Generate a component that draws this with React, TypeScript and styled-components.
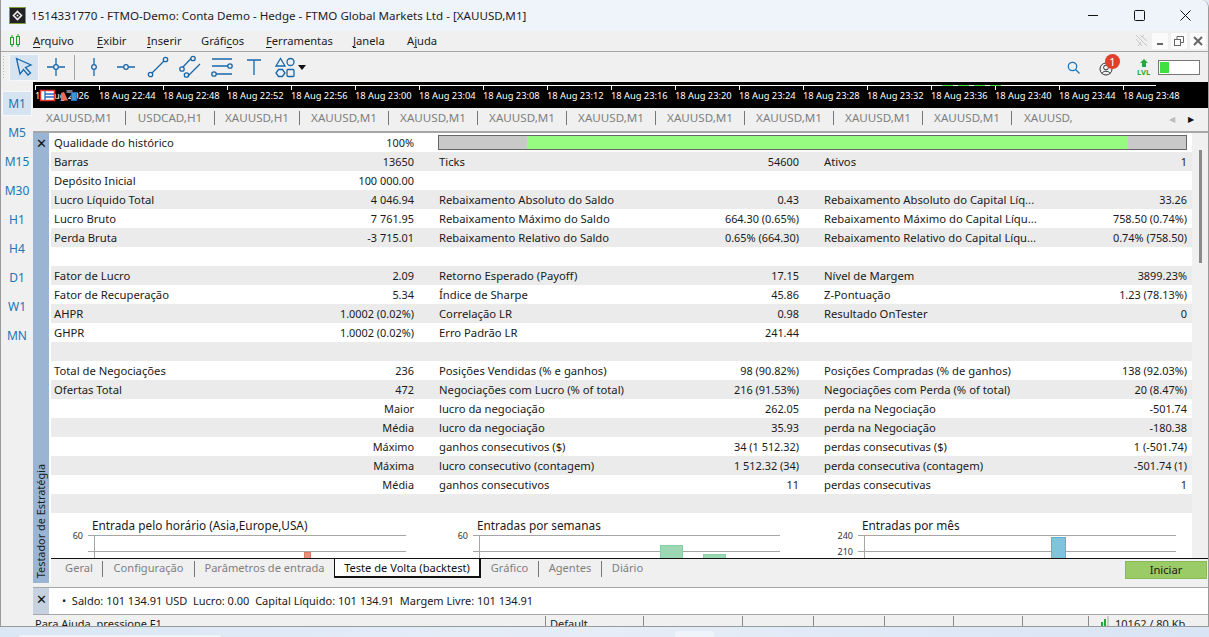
import styled, { createGlobalStyle } from "styled-components"

const Global = createGlobalStyle`
    html, body {
        margin: 0;
        padding: 0;
        height: 100%;
        overflow: hidden;
        background: #dfe8f4;
    }
    * { box-sizing: border-box; }
`

const Page = styled.div`
    width: 1209px;
    height: 637px;
    display: flex;
    flex-direction: column;
    font-family: "Noto Sans", "Open Sans", sans-serif;
    font-size: 12px;
    color: #1a1a1a;
    overflow: hidden;
`

const Win = styled.div`
    height: 627px;
    flex: none;
    display: flex;
    flex-direction: column;
    overflow: hidden;
    background: #f0f0f0;
    border-left: 1px solid #9a9a9a;
    border-right: 1px solid #9a9a9a;
    border-bottom: 1px solid #9a9a9a;
    border-top-right-radius: 8px;
`

const Desktop = styled.div`
    height: 10px;
    flex: none;
    background: linear-gradient(90deg, #dbe7f5, #e6edf8 50%, #d9e4f4);
    display: flex;
    padding-left: 18px;
`

const TaskTab = styled.div<{ $w: number; $top: number; $left: number }>`
    width: ${(p) => p.$w}px;
    height: 10px;
    margin-top: ${(p) => p.$top}px;
    margin-left: ${(p) => p.$left}px;
    background: #eff3fa;
    border-radius: 4px 4px 0 0;
`

const TitleBar = styled.div`
    height: 31px;
    flex: none;
    display: flex;
    align-items: center;
    background: #eff4fa;
    padding-left: 8px;
`

const TitleText = styled.div`
    margin-left: 5px;
    flex: 1;
    font-size: 11.6px;
    white-space: nowrap;
    color: #1c1c1c;
`

const WinButton = styled.div`
    width: 46px;
    height: 31px;
    display: flex;
    align-items: center;
    justify-content: center;
`

const MenuBar = styled.div`
    height: 21px;
    flex: none;
    display: flex;
    align-items: center;
    background: #f0f0f0;
    border-bottom: 1px solid #a6a6a6;
    padding: 0 0 1px 8px;
`

const MenuItems = styled.div`
    display: flex;
    margin-left: 12px;
    flex: 1;
`

const MenuItem = styled.span<{ $w: number }>`
    width: ${(p) => p.$w}px;
    color: #1c1c1c;
    font-size: 11.2px;
    white-space: nowrap;
    u { text-underline-offset: 2px; }
`

const PinIcon = styled.svg`
    margin-right: 4px;
`

const MdiButtons = styled.div`
    display: flex;
    align-items: center;
    gap: 3px;
    padding-right: 2px;
`

const MdiButton = styled.div`
    width: 16px;
    height: 16px;
    background: #fbfbfb;
    display: flex;
    align-items: center;
    justify-content: center;
`

const Toolbar = styled.div`
    height: 30px;
    flex: none;
    display: flex;
    align-items: center;
    background: #f0f0f0;
    padding-left: 1px;
`

const Grip = styled.div`
    width: 4px;
    height: 24px;
    margin-right: 3px;
    background-image: radial-gradient(#b5b5b5 1px, transparent 1px);
    background-size: 3px 3px;
`

const ToolButton = styled.div<{ $active?: boolean; $w?: number }>`
    width: ${(p) => p.$w || 30}px;
    height: 27px;
    display: flex;
    align-items: center;
    justify-content: center;
    background: ${(p) => (p.$active ? "#d6e4f2" : "transparent")};
    border: 1px solid ${(p) => (p.$active ? "#f4f8fc" : "transparent")};
`

const ToolSep = styled.div`
    width: 1px;
    height: 25px;
    background: #a8a8a8;
    margin: 0 3px 0 1px;
`

const Caret = styled.svg`
    margin-left: -2px;
`

const ToolSpacer = styled.div`
    flex: 1;
`

const Battery = styled.div`
    width: 42px;
    height: 15px;
    margin: 0 8px 0 7px;
    border: 1px solid #777;
    background: #fff;
    padding: 1px;
    display: flex;
`

const BatteryFill = styled.div`
    width: 9px;
    background: #3fe03f;
`

const Badge = styled.span`
    position: absolute;
    top: -5px;
    left: 6px;
    width: 15px;
    height: 15px;
    border-radius: 50%;
    background: #e0402a;
    color: #fff;
    font-size: 11px;
    line-height: 15px;
    text-align: center;
`

const UserIcon = styled.div`
    position: relative;
    width: 16px;
    height: 16px;
    margin: 0 22px 0 19px;
`

const UserGlyph = styled.svg`
    margin-top: 3px;
`

const Main = styled.div`
    flex: 1;
    min-height: 0;
    display: flex;
`

const Periods = styled.div`
    width: 32px;
    flex: none;
    display: flex;
    flex-direction: column;
    align-items: center;
    padding-top: 9px;
    background: #f0f0f0;
`

const Period = styled.div<{ $active?: boolean }>`
    width: 30px;
    height: ${(p) => (p.$active ? 25 : 29)}px;
    margin-bottom: ${(p) => (p.$active ? 2 : 0)}px;
    display: flex;
    align-items: center;
    justify-content: center;
    font-size: 12px;
    color: #2274b4;
    background: ${(p) => (p.$active ? "#d6e4f2" : "transparent")};
    border: ${(p) => (p.$active ? "1px solid #f6f9fc" : "none")};
`

const Content = styled.div`
    flex: 1;
    min-width: 0;
    display: flex;
    flex-direction: column;
`

const Ruler = styled.div`
    height: 26px;
    flex: none;
    background: #000;
    position: relative;
    overflow: hidden;
`

const RulerLabels = styled.div`
    display: flex;
    padding: 7px 0 0 2px;
`

const RulerLabel = styled.div`
    width: 64px;
    flex: none;
    color: #fff;
    font-size: 9.3px;
    line-height: 14px;
    white-space: nowrap;
`

const RulerMarks = styled.svg`
    position: absolute;
    left: 0;
    top: 0;
`

const ChartTabs = styled.div`
    height: 25px;
    flex: none;
    display: flex;
    align-items: center;
    background: #f0f0f0;
    border-bottom: 2px solid #a6a6a6;
    padding-bottom: 3px;
    position: relative;
    overflow: hidden;
`

const ChartTab = styled.div<{ $w: number; $last?: boolean }>`
    width: ${(p) => p.$w}px;
    flex: none;
    height: 14px;
    line-height: 14px;
    padding-left: ${(p) => (p.$last ? 12 : 0)}px;
    text-align: ${(p) => (p.$last ? "left" : "center")};
    color: #7f7f7f;
    font-size: 11.6px;
    white-space: nowrap;
    border-right: ${(p) => (p.$last ? "none" : "1px solid #777")};
`

const TabArrows = styled.div`
    position: absolute;
    right: 0;
    top: 0;
    height: 20px;
    width: 50px;
    background: #f0f0f0;
    display: flex;
    align-items: center;
    justify-content: flex-end;
    gap: 13px;
    padding-right: 14px;
    font-size: 8px;
`

const TabArrow = styled.span<{ $off?: boolean }>`
    color: ${(p) => (p.$off ? "#bdbdbd" : "#111")};
`

const Tester = styled.div`
    height: 450px;
    flex: none;
    display: flex;
    background: #fff;
`

const BlueStrip = styled.div<{ $light?: boolean }>`
    width: 16px;
    flex: none;
    background: ${(p) => (p.$light ? "#c6d2e0" : "#9ab5d3")};
    position: relative;
    display: flex;
    justify-content: center;
    padding-top: ${(p) => (p.$light ? 4 : 3)}px;
    font-size: 13px;
    line-height: 14px;
    color: #111;
`

const StripLabel = styled.div`
    position: absolute;
    bottom: 5px;
    left: 0;
    width: 16px;
    writing-mode: vertical-rl;
    transform: rotate(180deg);
    font-size: 10.9px;
    line-height: 16px;
    white-space: nowrap;
    color: #1a1a1a;
`

const TesterBody = styled.div`
    flex: 1;
    min-width: 0;
    display: flex;
    flex-direction: column;
`

const ReportArea = styled.div`
    height: 425px;
    flex: none;
    display: flex;
    overflow: hidden;
`

const Report = styled.div`
    width: 1141px;
    flex: none;
    margin-left: 2px;
`

const Row = styled.div`
    height: 19px;
    display: grid;
    grid-template-columns: 360px 360px 363px;
    column-gap: 25px;
    padding-left: 3px;
    line-height: 19px;
    font-size: 11.25px;
    white-space: nowrap;
    &:nth-child(even) {
        background: #ebebeb;
    }
`

const Cell = styled.div`
    display: flex;
    justify-content: space-between;
    min-width: 0;
`

const Value = styled.span`
    font-size: 10.9px;
`

const Progress = styled.div`
    height: 15px;
    margin: 2px 0 0 -1px;
    display: flex;
    border: 1px solid #666;
    background: #c9c9c9;
    grid-column: 2 / 4;
    padding-left: 88px;
`

const ProgressFill = styled.div`
    width: 601px;
    background: #97fb82;
`

const Gutter = styled.div`
    flex: 1;
    background: #f0f0f0;
    position: relative;
`

const Thumb = styled.div`
    position: absolute;
    left: 7px;
    top: 17px;
    width: 3px;
    height: 113px;
    background: #8a8a8a;
`

const Charts = styled.div`
    height: 45px;
    display: grid;
    grid-template-columns: 385px 385px 371px;
`

const ChartTitle = styled.div`
    margin-left: 41px;
    height: 21px;
    padding-top: 4px;
    line-height: 17px;
    font-size: 11.8px;
    white-space: nowrap;
`

const ChartPlot = styled.svg`
    display: block;
    overflow: visible;
`

const Bottom = styled.div`
    height: 25px;
    flex: none;
    display: flex;
    background: #f0f0f0;
    border-top: 1px solid #111;
    margin-left: 2px;
`

const BottomTab = styled.div<{ $w: number; $last?: boolean; $pad?: number }>`
    width: ${(p) => p.$w}px;
    flex: none;
    height: 16px;
    margin-top: 2px;
    padding-left: ${(p) => p.$pad || 0}px;
    line-height: 13px;
    text-align: center;
    color: #7f7f7f;
    font-size: 11.1px;
    white-space: nowrap;
    border-right: ${(p) => (p.$last ? "none" : "1px solid #777")};
`

const ActiveTab = styled.div`
    width: 147px;
    flex: none;
    height: 19px;
    background: #fff;
    text-align: center;
    font-size: 11.1px;
    line-height: 17px;
    color: #111;
    white-space: nowrap;
    border-left: 1px solid #111;
    border-right: 2px solid #111;
    border-bottom: 2px solid #111;
`

const BottomSpace = styled.div`
    flex: 1;
`

const StartButton = styled.div`
    width: 82px;
    height: 18px;
    margin: 2px 1px 0 0;
    background: #9bcb66;
    border: 1px solid #84bd58;
    text-align: center;
    line-height: 16px;
    font-size: 11.2px;
    color: #1a1a1a;
`

const Gap = styled.div`
    height: 5px;
    flex: none;
    background: #f0f0f0;
    border-bottom: 1px solid #a6a6a6;
`

const Toolbox = styled.div`
    height: 27px;
    flex: none;
    display: flex;
    background: #fff;
    border-bottom: 1px solid #a6a6a6;
`

const ToolboxText = styled.div`
    margin-left: 13px;
    line-height: 25px;
    font-size: 11px;
    white-space: nowrap;
`

const StatusBar = styled.div`
    flex: 1;
    min-height: 0;
    display: flex;
    overflow: hidden;
    background: #f0f0f0;
    font-size: 11px;
    line-height: 15px;
    padding-top: 1px;
`

const StatusCell = styled.div<{ $w: number; $pad?: number }>`
    width: ${(p) => p.$w}px;
    flex: none;
    padding-left: ${(p) => p.$pad || 4}px;
    border-left: 1px solid #8a8a8a;
    height: 16px;
    white-space: nowrap;
    display: flex;
    gap: 6px;
    &:first-child {
        border-left: none;
        padding-left: 2px;
    }
`

const blue = "#1767ab"

type RowData = [string?, string?, string?, string?, string?, string?]

const rows: RowData[] = [
    ["Qualidade do histórico", "100%"],
    ["Barras", "13650", "Ticks", "54600", "Ativos", "1"],
    ["Depósito Inicial", "100 000.00"],
    ["Lucro Líquido Total", "4 046.94", "Rebaixamento Absoluto do Saldo", "0.43", "Rebaixamento Absoluto do Capital Líq...", "33.26"],
    ["Lucro Bruto", "7 761.95", "Rebaixamento Máximo do Saldo", "664.30 (0.65%)", "Rebaixamento Máximo do Capital Líqu...", "758.50 (0.74%)"],
    ["Perda Bruta", "-3 715.01", "Rebaixamento Relativo do Saldo", "0.65% (664.30)", "Rebaixamento Relativo do Capital Líqu...", "0.74% (758.50)"],
    [],
    ["Fator de Lucro", "2.09", "Retorno Esperado (Payoff)", "17.15", "Nível de Margem", "3899.23%"],
    ["Fator de Recuperação", "5.34", "Índice de Sharpe", "45.86", "Z-Pontuação", "1.23 (78.13%)"],
    ["AHPR", "1.0002 (0.02%)", "Correlação LR", "0.98", "Resultado OnTester", "0"],
    ["GHPR", "1.0002 (0.02%)", "Erro Padrão LR", "241.44"],
    [],
    ["Total de Negociações", "236", "Posições Vendidas (% e ganhos)", "98 (90.82%)", "Posições Compradas (% de ganhos)", "138 (92.03%)"],
    ["Ofertas Total", "472", "Negociações com Lucro (% of total)", "216 (91.53%)", "Negociações com Perda (% of total)", "20 (8.47%)"],
    ["", "Maior", "lucro da negociação", "262.05", "perda na Negociação", "-501.74"],
    ["", "Média", "lucro da negociação", "35.93", "perda na Negociação", "-180.38"],
    ["", "Máximo", "ganhos consecutivos ($)", "34 (1 512.32)", "perdas consecutivas ($)", "1 (-501.74)"],
    ["", "Máxima", "lucro consecutivo (contagem)", "1 512.32 (34)", "perda consecutiva (contagem)", "-501.74 (1)"],
    ["", "Média", "ganhos consecutivos", "11", "perdas consecutivas", "1"],
    [],
]

const rulerTimes = [
    "18 Aug 2026", "18 Aug 22:44", "18 Aug 22:48", "18 Aug 22:52", "18 Aug 22:56", "18 Aug 23:00",
    "18 Aug 23:04", "18 Aug 23:08", "18 Aug 23:12", "18 Aug 23:16", "18 Aug 23:20", "18 Aug 23:24",
    "18 Aug 23:28", "18 Aug 23:32", "18 Aug 23:36", "18 Aug 23:40", "18 Aug 23:44", "18 Aug 23:48",
]

const chartTabs: [string, number][] = [
    ["XAUUSD,M1", 93], ["USDCAD,H1", 89], ["XAUUSD,H1", 85], ["XAUUSD,M1", 89], ["XAUUSD,M1", 89],
    ["XAUUSD,M1", 89], ["XAUUSD,M1", 89], ["XAUUSD,M1", 89], ["XAUUSD,M1", 89], ["XAUUSD,M1", 89],
    ["XAUUSD,M1", 89], ["XAUUSD,", 89],
]

const periods = ["M1", "M5", "M15", "M30", "H1", "H4", "D1", "W1", "MN"]

function Icon({ children }: { children: React.ReactNode }) {
    return (
        <svg width="24" height="24" viewBox="0 0 24 24" fill="none" stroke={blue} strokeWidth="1.3">
            {children}
        </svg>
    )
}

function Chart({ labels, width, title, bars, color, edge }: {
    labels: string[]
    width: number
    title: string
    bars: [number, number, number][]
    color: string
    edge: string
}) {
    return (
        <div>
            <ChartTitle>{title}</ChartTitle>
            <ChartPlot width={width + 37} height="24">
                {labels.map((l, i) => (
                    <text key={l} x="32" y={4.5 + i * 16} textAnchor="end" fontSize="9" fill="#333" fontFamily="Noto Sans">{l}</text>
                ))}
                <line x1="37" y1="1.5" x2={37 + width} y2="1.5" stroke="#a6a6a6" />
                <line x1="37" y1="17.5" x2={37 + width} y2="17.5" stroke="#a6a6a6" />
                <line x1="43.5" y1="1" x2="43.5" y2="24" stroke="#a6a6a6" />
                {bars.map(([bx, by, bw]) => (
                    <rect key={bx} x={bx + 0.5} y={by + 0.5} width={bw} height={24} fill={color} stroke={edge} />
                ))}
            </ChartPlot>
        </div>
    )
}

export default function App() {
    return (
        <Page>
            <Global />
            <Win>
                <TitleBar>
                    <svg width="17" height="17" viewBox="0 0 17 17">
                        <rect x="0.5" y="0.5" width="16" height="16" fill="#222" stroke="#7f9f3a" />
                        <path d="M8.5 4.5 L12.5 8.5 L8.5 12.5 L4.5 8.5 Z" fill="none" stroke="#eee" strokeWidth="1.6" />
                        <circle cx="8.5" cy="8.5" r="1" fill="#eee" />
                    </svg>
                    <TitleText>1514331770 - FTMO-Demo: Conta Demo - Hedge - FTMO Global Markets Ltd - [XAUUSD,M1]</TitleText>
                    <WinButton>
                        <svg width="11" height="11"><line x1="0" y1="5.5" x2="10" y2="5.5" stroke="#111" /></svg>
                    </WinButton>
                    <WinButton>
                        <svg width="11" height="11"><rect x="0.5" y="0.5" width="10" height="10" rx="1" fill="none" stroke="#111" /></svg>
                    </WinButton>
                    <WinButton>
                        <svg width="11" height="11"><path d="M0.5 0.5 L10.5 10.5 M10.5 0.5 L0.5 10.5" stroke="#111" /></svg>
                    </WinButton>
                </TitleBar>
                <MenuBar>
                    <svg width="12" height="14" viewBox="0 0 12 14" fill="none" stroke="#1f9d2c">
                        <rect x="1.5" y="3.5" width="3" height="7" />
                        <rect x="7.5" y="2.5" width="3" height="8" />
                        <path d="M3 1 V3.5 M3 10.5 V13 M9 0 V2.5 M9 10.5 V13" />
                    </svg>
                    <MenuItems>
                        <MenuItem $w={64}><u>A</u>rquivo</MenuItem>
                        <MenuItem $w={50}><u>E</u>xibir</MenuItem>
                        <MenuItem $w={54}><u>I</u>nserir</MenuItem>
                        <MenuItem $w={65}>Gráfi<u>c</u>os</MenuItem>
                        <MenuItem $w={87}><u>F</u>erramentas</MenuItem>
                        <MenuItem $w={54}><u>J</u>anela</MenuItem>
                        <MenuItem $w={60}>A<u>j</u>uda</MenuItem>
                    </MenuItems>
                    <PinIcon width="13" height="13" viewBox="0 0 13 13" fill="none" stroke="#c4c4c4">
                        <path d="M1 1 L12 12 M5 1 L12 7 M1 5 L7 12 M3 12 L6 8 M9 1 L7 3" />
                    </PinIcon>
                    <MdiButtons>
                        <MdiButton>
                            <svg width="10" height="10"><rect x="2" y="7" width="6" height="2" fill="#666" /></svg>
                        </MdiButton>
                        <MdiButton>
                            <svg width="10" height="10" fill="none" stroke="#666"><rect x="0.5" y="3.5" width="6" height="6" /><path d="M3 3 V0.5 H9.5 V6.5 H7" /></svg>
                        </MdiButton>
                        <MdiButton>
                            <svg width="10" height="10"><path d="M1 1 L9 9 M9 1 L1 9" stroke="#666" strokeWidth="2" /></svg>
                        </MdiButton>
                    </MdiButtons>
                </MenuBar>
                <Toolbar>
                    <Grip />
                    <ToolButton $active>
                        <Icon>
                            <path d="M4.5 3.5 L19 10 L13.5 12.5 L18.5 18 L16 20 L11.5 14.5 L8 19 Z" />
                        </Icon>
                    </ToolButton>
                    <ToolButton $w={34}>
                        <Icon>
                            <path d="M3 12 H9.5 M14.5 12 H21 M12 3 V9.5 M12 14.5 V21" />
                            <circle cx="12" cy="12" r="2.3" />
                        </Icon>
                    </ToolButton>
                    <ToolSep />
                    <ToolButton $w={32}>
                        <Icon>
                            <path d="M12 3 V9.5 M12 14.5 V21" />
                            <circle cx="12" cy="12" r="2.3" />
                        </Icon>
                    </ToolButton>
                    <ToolButton $w={32}>
                        <Icon>
                            <path d="M3 12 H9.5 M14.5 12 H21" />
                            <circle cx="12" cy="12" r="2.3" />
                        </Icon>
                    </ToolButton>
                    <ToolButton $w={32}>
                        <Icon>
                            <path d="M6 18 L18 6" />
                            <circle cx="4.5" cy="19.5" r="2.2" />
                            <circle cx="19.5" cy="4.5" r="2.2" />
                        </Icon>
                    </ToolButton>
                    <ToolButton $w={32}>
                        <Icon>
                            <path d="M5 12 L13 3.5 M10 21 L22 9" />
                            <circle cx="4" cy="14" r="2.2" />
                            <circle cx="15" cy="3.5" r="2.2" />
                            <circle cx="8.5" cy="20" r="2.2" />
                        </Icon>
                    </ToolButton>
                    <ToolButton $w={32}>
                        <Icon>
                            <path d="M2 4 H22 M2 11 H18 M6 19 H22" />
                            <circle cx="20" cy="11" r="2.2" />
                            <circle cx="4" cy="19" r="2.2" />
                        </Icon>
                    </ToolButton>
                    <ToolButton $w={32}>
                        <Icon>
                            <path d="M5 5 H19 M12 5 V20" />
                        </Icon>
                    </ToolButton>
                    <ToolButton $w={30}>
                        <Icon>
                            <path d="M3 11 L7.5 3.5 L12 11 Z" />
                            <circle cx="17.5" cy="7" r="3.5" />
                            <path d="M3 18 L5.5 14.5 H9.5 L12 18 L9.5 21.5 H5.5 Z" />
                            <rect x="14" y="14.5" width="7" height="7" rx="1" />
                        </Icon>
                    </ToolButton>
                    <Caret width="8" height="5" viewBox="0 0 8 5"><path d="M0 0 H8 L4 5 Z" fill="#111" /></Caret>
                    <ToolSpacer />
                    <svg width="13" height="13" viewBox="0 0 13 13" fill="none" stroke="#2274b4" strokeWidth="1.3">
                        <circle cx="5.5" cy="5.5" r="4.2" />
                        <path d="M8.5 8.5 L12.5 12.5" />
                    </svg>
                    <UserIcon>
                        <UserGlyph width="14" height="14" viewBox="0 0 14 14" fill="none" stroke="#333">
                            <circle cx="7" cy="7" r="6" />
                            <circle cx="7" cy="5.5" r="2.4" />
                            <path d="M3 11.5 C4 8.5 10 8.5 11 11.5" />
                        </UserGlyph>
                        <Badge>1</Badge>
                    </UserIcon>
                    <svg width="14" height="17" viewBox="0 0 14 17">
                        <path d="M7 0 L11 4 H9 V8 H5 V4 H3 Z" fill="#25a83a" />
                        <text x="0" y="16" fontSize="7.5" fontWeight="700" fill="#25a83a" fontFamily="Noto Sans">LVL</text>
                    </svg>
                    <Battery><BatteryFill /></Battery>
                </Toolbar>
                <Main>
                    <Periods>
                        {periods.map((p, i) => (
                            <Period key={p} $active={i === 0}>{p}</Period>
                        ))}
                    </Periods>
                    <Content>
                        <Ruler>
                            <RulerLabels>
                                {rulerTimes.map((t) => (
                                    <RulerLabel key={t}>{t}</RulerLabel>
                                ))}
                            </RulerLabels>
                            <RulerMarks width="1176" height="26">
                                <path d="M2 3.5 H1123" stroke="#fff" fill="none" />
                                {rulerTimes.map((t, i) => (
                                    <line key={t} x1={2.5 + i * 64} y1="3" x2={2.5 + i * 64} y2="8" stroke="#fff" />
                                ))}
                                <path d="M909 3.5 H920 M925 3.5 H936 M941 3.5 H952 M957 3.5 H968" stroke="#3fe03f" />
                                <rect x="7.5" y="8.5" width="14" height="10" fill="#fff" stroke="#e0342c" strokeWidth="1.5" />
                                <path d="M12 9 V18 M12 12 H21 M12 15 H21" stroke="#1f6fc0" strokeWidth="1.3" />
                                <path d="M28 11 L31 10 L35 18.5 H28 Z" fill="#f06a5a" />
                                <rect x="33.5" y="8" width="6" height="3" fill="#777" />
                                <rect x="38.5" y="10.5" width="5" height="8" fill="#3f93d6" stroke="#1f6fc0" />
                            </RulerMarks>
                        </Ruler>
                        <ChartTabs>
                            {chartTabs.map(([t, w], i) => (
                                <ChartTab key={i} $w={w} $last={i === chartTabs.length - 1}>{t}</ChartTab>
                            ))}
                            <TabArrows>
                                <TabArrow $off>◀</TabArrow>
                                <TabArrow>▶</TabArrow>
                            </TabArrows>
                        </ChartTabs>
                        <Tester>
                            <BlueStrip>
                                ✕
                                <StripLabel>Testador de Estratégia</StripLabel>
                            </BlueStrip>
                            <TesterBody>
                                <ReportArea>
                                    <Report>
                                        {rows.map((r, i) => (
                                            <Row key={i}>
                                                <Cell><span>{r[0]}</span><Value>{r[1]}</Value></Cell>
                                                {i === 0 ? (
                                                    <Progress><ProgressFill /></Progress>
                                                ) : (
                                                    <>
                                                        <Cell><span>{r[2]}</span><Value>{r[3]}</Value></Cell>
                                                        <Cell><span>{r[4]}</span><Value>{r[5]}</Value></Cell>
                                                    </>
                                                )}
                                            </Row>
                                        ))}
                                        <Charts>
                                            <Chart labels={["60"]} width={318} title="Entrada pelo horário (Asia,Europe,USA)" bars={[[253, 18, 6]]} color="#e8907a" edge="#e07a64" />
                                            <Chart labels={["60"]} width={307} title="Entradas por semanas" bars={[[224, 11, 22], [267, 20, 22]]} color="#9dd8b4" edge="#8ccfa5" />
                                            <Chart labels={["240", "210"]} width={318} title="Entradas por mês" bars={[[230, 3, 14]]} color="#7fc4dc" edge="#5fb0d4" />
                                        </Charts>
                                    </Report>
                                    <Gutter><Thumb /></Gutter>
                                </ReportArea>
                                <Bottom>
                                    <BottomTab $w={52} $pad={5}>Geral</BottomTab>
                                    <BottomTab $w={92}>Configuração</BottomTab>
                                    <BottomTab $w={139} $last>Parâmetros de entrada</BottomTab>
                                    <ActiveTab>Teste de Volta (backtest)</ActiveTab>
                                    <BottomTab $w={58}>Gráfico</BottomTab>
                                    <BottomTab $w={63}>Agentes</BottomTab>
                                    <BottomTab $w={51} $last>Diário</BottomTab>
                                    <BottomSpace />
                                    <StartButton>Iniciar</StartButton>
                                </Bottom>
                            </TesterBody>
                        </Tester>
                        <Gap />
                        <Toolbox>
                            <BlueStrip $light>✕</BlueStrip>
                            <ToolboxText>•&nbsp; Saldo: 101 134.91 USD&nbsp; Lucro: 0.00&nbsp; Capital Líquido: 101 134.91&nbsp; Margem Livre: 101 134.91</ToolboxText>
                        </Toolbox>
                        <StatusBar>
                            <StatusCell $w={512}>Para Ajuda, pressione F1</StatusCell>
                            <StatusCell $w={98}>Default</StatusCell>
                            <StatusCell $w={99}></StatusCell>
                            <StatusCell $w={71}></StatusCell>
                            <StatusCell $w={71}></StatusCell>
                            <StatusCell $w={69}></StatusCell>
                            <StatusCell $w={69}></StatusCell>
                            <StatusCell $w={66}></StatusCell>
                            <StatusCell $w={121} $pad={11}>
                                <svg width="9" height="12"><rect x="1" y="6" width="2" height="6" fill="#25a83a" /><rect x="4" y="3" width="2" height="9" fill="#25a83a" /><rect x="7" y="0" width="2" height="12" fill="#ccc" /></svg>
                                10162 / 80 Kb
                            </StatusCell>
                        </StatusBar>
                    </Content>
                </Main>
            </Win>
            <Desktop>
                <TaskTab $w={204} $top={8} $left={0} />
                <TaskTab $w={39} $top={4} $left={453} />
            </Desktop>
        </Page>
    )
}
